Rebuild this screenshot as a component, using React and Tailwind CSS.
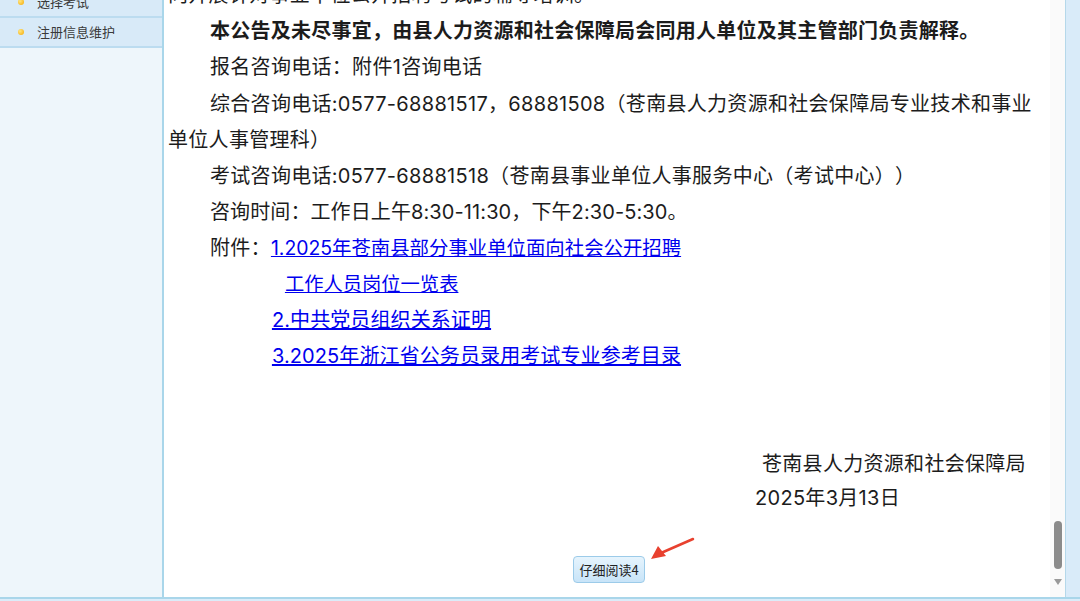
const menu = [
  { label: '选择考试', cut: true },
  { label: '注册信息维护' },
];

function Sidebar() {
  return (
    <div className="w-[164px] shrink-0 bg-[#eef6fb] border-r-2 border-[#a9d6ea] overflow-hidden">
      {menu.map((m) => (
        <div
          key={m.label}
          className={`flex items-center h-[30px] bg-[#d8eaf8] border-b-2 border-[#bcdcf0] pl-[18px] ${m.cut ? 'mt-[-12px]' : ''}`}
        >
          <span className="w-[6px] h-[6px] rounded-full bg-[radial-gradient(circle_at_35%_35%,#ffe680,#f5a800)] mr-[13px]" />
          <span className="text-[13px] text-[#3a3a3a]">{m.label}</span>
        </div>
      ))}
    </div>
  );
}

function Scrollbar() {
  return (
    <div className="w-[16px] shrink-0 bg-[#fafafa] border-r border-[#b5d8ea] flex flex-col items-center justify-end pb-[12px]">
      <div className="w-[8px] h-[48px] rounded-full bg-[#8b8b8b] mb-[10px]" />
      <svg width="8" height="6" viewBox="0 0 8 6">
        <path d="M0 0 H8 L4 6 Z" fill="#9a9a9a" />
      </svg>
    </div>
  );
}

export default function App() {
  return (
    <div
      className="w-[1080px] h-[601px] overflow-hidden bg-[#dbecf9] flex flex-col"
      style={{ fontFamily: '"Noto Sans CJK SC", "Noto Sans", sans-serif' }}
    >
      <div className="h-[599px] flex border-b-2 border-[#a9d6ea]">
        <Sidebar />

        <div className="flex-1 bg-white relative overflow-hidden">
          <div
            className="mt-[-23px] pl-[4px] text-[20px] leading-[36px] tracking-[0.3px] text-[#1c1c1c] whitespace-nowrap [text-spacing-trim:space-all]"
            style={{ fontFamily: 'Inter, "Noto Sans CJK SC", sans-serif' }}
          >
            <p>向开展针对事业单位公开招聘考试的辅导培训。</p>
            <p className="pl-[42px] font-bold tracking-[0.25px]">
              本公告及未尽事宜，由县人力资源和社会保障局会同用人单位及其主管部门负责解释。
            </p>
            <p className="pl-[42px]">报名咨询电话：附件1咨询电话</p>
            <p className="pl-[42px] mt-[1px]">
              综合咨询电话:0577-68881517，68881508（苍南县人力资源和社会保障局专业技术和事业
            </p>
            <p>单位人事管理科）</p>
            <p className="pl-[42px]">考试咨询电话:0577-68881518（苍南县事业单位人事服务中心（考试中心））</p>
            <p className="pl-[42px] tracking-[0.1px]">咨询时间：工作日上午8:30-11:30，下午2:30-5:30。</p>
            <div className="flex pl-[42px]">
              <span>附件：</span>
              <div className="flex flex-col text-[#0000ee]">
                <a href="#" className="underline text-[19.4px] tracking-normal">1.2025年苍南县部分事业单位面向社会公开招聘</a>
                <a href="#" className="underline ml-[14px] text-[19.3px] tracking-normal">工作人员岗位一览表</a>
                <a href="#" className="underline ml-[1px] tracking-[0.1px]">2.中共党员组织关系证明</a>
                <a href="#" className="underline ml-[1px] tracking-[0.1px]">3.2025年浙江省公务员录用考试专业参考目录</a>
              </div>
            </div>
            <p className="h-[72px]" />
            <p className="pl-[594px]">苍南县人力资源和社会保障局</p>
            <p className="pl-[587px] mt-[-2px]">2025年3月13日</p>
            <div className="flex justify-center mt-[40px]">
              <button
                className="h-[27px] px-[5px] rounded-[4px] border border-[#9ccbe9] bg-gradient-to-b from-[#e6f4fd] to-[#c8e4f8] text-[13px] leading-[25px] tracking-normal text-[#222]"
                style={{ fontFamily: '"Noto Sans CJK SC", sans-serif' }}
              >
                仔细阅读4
              </button>
            </div>
          </div>

          <svg
            className="absolute left-[485px] top-[536px]"
            width="50"
            height="26"
            viewBox="0 0 50 26"
          >
            <path d="M44 3 L12 17" stroke="#e8412f" strokeWidth="2.5" strokeLinecap="round" />
            <path d="M2 23 L9 10 L17 20 Z" fill="#e8412f" />
          </svg>
        </div>

        <Scrollbar />
        <div className="w-[14px] shrink-0 bg-[#d9ebf9]" />
      </div>
    </div>
  );
}
